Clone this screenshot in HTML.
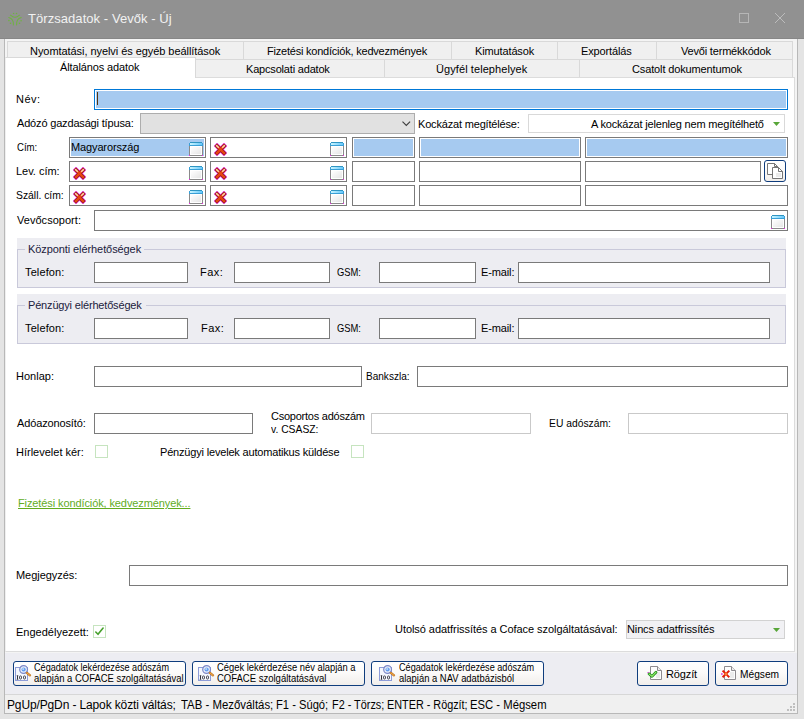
<!DOCTYPE html>
<html><head><meta charset="utf-8">
<style>
*{box-sizing:border-box;margin:0;padding:0}
html,body{width:804px;height:719px;overflow:hidden;background:#e4e4e4}
body{font-family:"Liberation Sans",sans-serif;font-size:11px;color:#000;position:relative}
.abs,.t,.in,.tab,.btn,svg{position:absolute}
.t{white-space:nowrap;line-height:13px;height:13px}
.in{background:#fff;border:1px solid #7a7a7a}
.in.lt{border-color:#c9c9c9}
.in.sel{box-shadow:inset 0 0 0 1px #fff;background:#a6caf0}
.tab{background:#f0f0f0;border:1px solid #d9d9d9}
.btn{border:1px solid #0f3d7d;border-radius:3px;background:linear-gradient(#ffffff,#fcfbfa 45%,#f1eeeb)}
.gb{position:absolute;background:#ededf2}
.gbf{position:absolute;border:1px solid #c9c9da}
.cb{position:absolute;width:13px;height:13px;border:1px solid #c6e4bf;background:#fff}
.s{font-size:10px;line-height:11px;height:11px}
</style></head><body>

<svg width="0" height="0" style="left:0;top:0"><defs>
<linearGradient id="gwb" x1="0" x2="1" y1="0" y2="0"><stop offset="0" stop-color="#c9f5ff"/><stop offset="1" stop-color="#66c8fb"/></linearGradient>
<linearGradient id="gwg" x1="0" x2="1" y1="0" y2="1"><stop offset="0" stop-color="#ffffff"/><stop offset="1" stop-color="#e6e6e6"/></linearGradient>
<symbol id="win" viewBox="0 0 14 14"><rect x="1" y="0" width="12" height="1" fill="#2f95c2"/><rect x="0" y="1" width="14" height="3" fill="#3a9fd6"/><rect x="1" y="1" width="12" height="2" fill="url(#gwb)"/><rect x="0" y="4" width="14" height="10" fill="#8a8a8a"/><rect x="1" y="4" width="12" height="9" fill="#fff"/><rect x="2" y="5" width="10" height="7" fill="url(#gwg)"/><rect x="0" y="13" width="1" height="1" fill="#f020e8"/><rect x="13" y="13" width="1" height="1" fill="#f020e8"/></symbol>
<symbol id="rx" viewBox="0 0 13 13"><g fill="none" stroke-linecap="square"><path d="M3 3L10 10M10 3L3 10" stroke="#e818e0" stroke-width="4.700" opacity=".9"/><path d="M3 3L10 10M10 3L3 10" stroke="#8c2414" stroke-width="3.600"/><path d="M3 3L10 10M10 3L3 10" stroke="#ea4412" stroke-width="2.300"/><path d="M2.700 2.700L4.300 4.300M10.300 2.700L8.700 4.300" stroke="#fad2b8" stroke-width="1.400"/></g></symbol>
<symbol id="mag" viewBox="0 0 17 16"><rect x="0.500" y="2.500" width="12" height="13" fill="#f4f7fd" stroke="#8e9cd8"/><g fill="#34343e"><rect x="2" y="10.500" width="1" height="4"/><rect x="1.600" y="10.500" width="1.800" height="0.600"/><rect x="1.600" y="13.900" width="1.800" height="0.600"/></g><g fill="none" stroke="#34343e" stroke-width="0.850"><rect x="4.500" y="10.900" width="2" height="3.200" rx="1"/><rect x="8.500" y="10.900" width="2" height="3.200" rx="1"/></g><circle cx="8.600" cy="4.500" r="3.900" fill="#e9effb" stroke="#7c88c8" stroke-width="1.200"/><circle cx="8.600" cy="4.500" r="2.100" fill="#5f9cee"/><circle cx="8.200" cy="4.100" r="1.100" fill="#b8d4f8"/><path d="M11.900 7.900L15 10.400" stroke="#b8701e" stroke-width="2.300" stroke-linecap="round"/><path d="M11.900 7.900L15 10.400" stroke="#f0a448" stroke-width="1.200" stroke-linecap="round"/></symbol>
<symbol id="pg" viewBox="0 0 12 14"><path d="M0.500 0.500H7.500L11.500 4.500V13.500H0.500Z" fill="#fdfdfd" stroke="#8e8b8f"/><path d="M7.500 0.500V4.500H11.500" fill="#ededed" stroke="#8e8b8f"/><rect x="6" y="6" width="4" height="6" fill="#ececec"/></symbol>
</defs></svg>

<div class="abs" style="left:0;top:0;width:804px;height:39px;background:#919191;border-bottom:1px solid #878787"></div>
<svg style="left:7px;top:11px" width="16" height="16" viewBox="0 0 16 16"><g fill="none" stroke="#6fb340" stroke-width="1.050" stroke-linecap="round"><path d="M3.500 4.200Q8 8.300 12.500 4.200"/><path d="M1.800 6.600Q6.800 8 6.400 14"/><path d="M14.200 6.600Q9.200 8 9.600 14"/></g><g fill="#6fb340"><circle cx="6.600" cy="2.500" r="0.800"/><circle cx="9.500" cy="2.500" r="0.800"/><circle cx="1.900" cy="9.600" r="0.800"/><circle cx="3.500" cy="12.300" r="0.800"/><circle cx="14.100" cy="9.800" r="0.800"/><circle cx="12.500" cy="12.300" r="0.800"/></g></svg>
<div class="t" id="title" style="left:28px;top:10px;font-size:13px;line-height:18px;height:18px;color:#f2f2f2;letter-spacing:0.057px;">Törzsadatok - Vevők - Új</div>
<svg style="left:739px;top:13px" width="10" height="10"><rect x=".5" y=".5" width="9" height="9" fill="none" stroke="#b6b6b6"/></svg>
<svg style="left:775px;top:13px" width="10" height="10"><path d="M0 0L10 10M10 0L0 10" stroke="#bcbcbc" stroke-width="1" fill="none"/></svg>
<div class="abs" style="left:4px;top:39px;width:794px;height:675px;background:#f4f4f4;border:1px solid #b8b8b8;border-top:none"></div>
<div class="tab" style="left:7px;top:41px;width:237px;height:19px"></div>
<div class="t" id="tb1" style="left:30px;top:45px;letter-spacing:-0.059px;">Nyomtatási, nyelvi és egyéb beállítások</div>
<div class="tab" style="left:243px;top:41px;width:209px;height:19px"></div>
<div class="t" id="tb2" style="left:267px;top:45px;letter-spacing:-0.217px;">Fizetési kondíciók, kedvezmények</div>
<div class="tab" style="left:451px;top:41px;width:107px;height:19px"></div>
<div class="t" id="tb3" style="left:475px;top:45px;letter-spacing:-0.13px;">Kimutatások</div>
<div class="tab" style="left:557px;top:41px;width:100px;height:19px"></div>
<div class="t" id="tb4" style="left:581px;top:45px;letter-spacing:-0.13px;">Exportálás</div>
<div class="tab" style="left:656px;top:41px;width:137px;height:19px"></div>
<div class="t" id="tb5" style="left:680px;top:45px;letter-spacing:-0.186px;margin-left:1px;">Vevői termékkódok</div>
<div class="tab" style="left:195px;top:59px;width:190px;height:19px"></div>
<div class="t" id="tb7" style="left:246px;top:63px;letter-spacing:-0.186px;">Kapcsolati adatok</div>
<div class="tab" style="left:384px;top:59px;width:196px;height:19px"></div>
<div class="t" id="tb8" style="left:436px;top:63px;letter-spacing:0.082px;">Ügyfél telephelyek</div>
<div class="tab" style="left:579px;top:59px;width:214px;height:19px"></div>
<div class="t" id="tb9" style="left:632px;top:63px;letter-spacing:-0.13px;">Csatolt dokumentumok</div>
<div class="abs" style="left:5px;top:77px;width:790px;height:575px;background:#fff;border:1px solid #dcdcdc;border-left-color:#efefef"></div>
<div class="tab" style="left:5px;top:57px;width:191px;height:21px;background:#fff;border-bottom:none;border-left-color:#efefef"></div>
<div class="t" id="tb6" style="left:59px;top:61px;letter-spacing:-0.13px;margin-left:1px;">Általános adatok</div>
<div class="t" id="l1" style="left:16px;top:93px;letter-spacing:0.47px;">Név:</div>
<div class="in sel" style="left:94px;top:89px;width:694px;height:21px;border-color:#0078d7"></div>
<div class="abs" style="left:97px;top:92px;width:1px;height:13px;background:#55340f"></div>
<div class="t" id="l2" style="left:16px;top:117px;letter-spacing:-0.171px;margin-left:1px;">Adózó gazdasági típusa:</div>
<div class="abs" style="left:140px;top:113px;width:275px;height:21px;background:#e1e1e1;border:1px solid #adadad"></div>
<svg style="left:401px;top:120px" width="11" height="8"><path d="M1.500 1.700L5.300 5.500L9.100 1.700" stroke="#3c3c3c" fill="none" stroke-width="1.100"/></svg>
<div class="t" id="l3" style="left:418px;top:118px;letter-spacing:-0.177px;">Kockázat megítélése:</div>
<div class="abs" style="left:528px;top:114px;width:257px;height:19px;background:#fff;border:1px solid #d9d9d9"></div>
<div class="t" id="l4" style="left:590px;top:118px;letter-spacing:-0.183px;margin-left:1px;">A kockázat jelenleg nem megítélhető</div>
<svg style="left:773px;top:122px" width="7" height="4"><path d="M0 0h7L3.500 4z" fill="#58a639"/></svg>
<div class="t" id="l5" style="left:16px;top:141px;letter-spacing:0;transform-origin:0 0;transform:scaleX(0.8718);margin-left:1px;">Cím:</div>
<div class="in sel" style="left:69px;top:137px;width:137px;height:21px"></div>
<div class="in" style="left:210px;top:137px;width:137px;height:21px"></div>
<div class="in sel" style="left:352px;top:137px;width:63px;height:21px"></div>
<div class="in sel" style="left:419px;top:137px;width:162px;height:21px"></div>
<div class="in sel" style="left:585px;top:137px;width:203px;height:21px"></div>
<svg style="left:189px;top:142px" width="14" height="14"><use href="#win"/></svg>
<svg style="left:330px;top:142px" width="14" height="14"><use href="#win"/></svg>
<svg style="left:214px;top:143px" width="13" height="13"><use href="#rx"/></svg>
<div class="t" id="l6" style="left:16px;top:165px;letter-spacing:-0.018px;">Lev. cím:</div>
<div class="in" style="left:69px;top:161px;width:137px;height:21px"></div>
<div class="in" style="left:210px;top:161px;width:137px;height:21px"></div>
<div class="in" style="left:352px;top:161px;width:63px;height:21px"></div>
<div class="in" style="left:419px;top:161px;width:162px;height:21px"></div>
<div class="in" style="left:585px;top:161px;width:176px;height:21px"></div>
<svg style="left:189px;top:166px" width="14" height="14"><use href="#win"/></svg>
<svg style="left:330px;top:166px" width="14" height="14"><use href="#win"/></svg>
<svg style="left:73px;top:167px" width="13" height="13"><use href="#rx"/></svg>
<svg style="left:214px;top:167px" width="13" height="13"><use href="#rx"/></svg>
<div class="t" id="l7" style="left:16px;top:189px;letter-spacing:0;transform-origin:0 0;transform:scaleX(0.9409);">Száll. cím:</div>
<div class="in" style="left:69px;top:185px;width:137px;height:21px"></div>
<div class="in" style="left:210px;top:185px;width:137px;height:21px"></div>
<div class="in" style="left:352px;top:185px;width:63px;height:21px"></div>
<div class="in" style="left:419px;top:185px;width:162px;height:21px"></div>
<div class="in" style="left:585px;top:185px;width:203px;height:21px"></div>
<svg style="left:189px;top:190px" width="14" height="14"><use href="#win"/></svg>
<svg style="left:330px;top:190px" width="14" height="14"><use href="#win"/></svg>
<svg style="left:73px;top:191px" width="13" height="13"><use href="#rx"/></svg>
<svg style="left:214px;top:191px" width="13" height="13"><use href="#rx"/></svg>
<div class="t" id="l5v" style="left:71px;top:141px;letter-spacing:-0.13px;">Magyarország</div>
<div class="btn" style="left:764px;top:160px;width:22px;height:22px"></div>
<svg style="left:767px;top:163px" width="17" height="16" viewBox="0 0 17 16"><g fill="#fff" stroke="#666" stroke-width="0.900" stroke-linejoin="miter"><path d="M0.500 0.500H7.500L10.500 3.500V11.500H0.500Z"/><path d="M7.500 0.500V3.500H10.500" fill="none"/><path d="M5.500 4.500H11.500L15.500 8.500V15.500H5.500Z"/><path d="M11.500 4.500V8.500H15.500" fill="none"/></g><rect x="9" y="10" width="5" height="4" fill="#ebebeb"/></svg>
<div class="t" id="l8" style="left:16px;top:214px;letter-spacing:0.034px;margin-left:1px;">Vevőcsoport:</div>
<div class="in" style="left:94px;top:210px;width:694px;height:21px"></div>
<svg style="left:771px;top:215px" width="14" height="14"><use href="#win"/></svg>
<div class="gb" style="left:17px;top:238px;width:769px;height:50px"></div>
<div class="gbf" style="left:17px;top:249px;width:769px;height:39px"></div>
<div class="gb" style="left:25px;top:243px;width:119px;height:13px"></div>
<div class="t" id="g1" style="left:28px;top:243px;letter-spacing:-0.087px;color:#20203c;">Központi elérhetőségek</div>
<div class="t" id="g1a" style="left:24px;top:266px;letter-spacing:0.127px;margin-left:1px;">Telefon:</div>
<div class="in" style="left:94px;top:262px;width:94px;height:21px"></div>
<div class="t" id="g1b" style="left:200px;top:266px;letter-spacing:0.47px;">Fax:</div>
<div class="in" style="left:234px;top:262px;width:96px;height:21px"></div>
<div class="t" id="g1c" style="left:336px;top:266px;letter-spacing:0;transform-origin:0 0;transform:scaleX(0.8519);margin-left:1px;">GSM:</div>
<div class="in" style="left:379px;top:262px;width:97px;height:21px"></div>
<div class="t" id="g1d" style="left:481px;top:266px;letter-spacing:-0.13px;">E-mail:</div>
<div class="in" style="left:518px;top:262px;width:252px;height:21px"></div>
<div class="gb" style="left:17px;top:294px;width:769px;height:50px"></div>
<div class="gbf" style="left:17px;top:305px;width:769px;height:39px"></div>
<div class="gb" style="left:25px;top:299px;width:121px;height:13px"></div>
<div class="t" id="g2" style="left:28px;top:299px;letter-spacing:-0.173px;color:#20203c;">Pénzügyi elérhetőségek</div>
<div class="t" id="g2a" style="left:24px;top:322px;letter-spacing:0.127px;margin-left:1px;">Telefon:</div>
<div class="in" style="left:94px;top:318px;width:94px;height:21px"></div>
<div class="t" id="g2b" style="left:201px;top:322px;letter-spacing:0.47px;">Fax:</div>
<div class="in" style="left:234px;top:318px;width:96px;height:21px"></div>
<div class="t" id="g2c" style="left:336px;top:322px;letter-spacing:0;transform-origin:0 0;transform:scaleX(0.8519);margin-left:1px;">GSM:</div>
<div class="in" style="left:379px;top:318px;width:97px;height:21px"></div>
<div class="t" id="g2d" style="left:481px;top:322px;letter-spacing:-0.13px;">E-mail:</div>
<div class="in" style="left:518px;top:318px;width:252px;height:21px"></div>
<div class="t" id="l9" style="left:16px;top:370px;letter-spacing:0.02px;">Honlap:</div>
<div class="in" style="left:94px;top:366px;width:268px;height:21px"></div>
<div class="t" id="l10" style="left:366px;top:370px;letter-spacing:0;transform-origin:0 0;transform:scaleX(0.913);">Bankszla:</div>
<div class="in" style="left:417px;top:366px;width:371px;height:21px"></div>
<div class="t" id="l11" style="left:16px;top:417px;letter-spacing:-0.13px;margin-left:1px;">Adóazonosító:</div>
<div class="in" style="left:94px;top:413px;width:159px;height:21px"></div>
<div class="t" id="l12" style="left:270px;top:410px;letter-spacing:-0.242px;margin-left:1px;">Csoportos adószám</div>
<div class="t" id="l13" style="left:270px;top:423px;letter-spacing:0;transform-origin:0 0;transform:scaleX(0.94);margin-left:1px;">v. CSASZ:</div>
<div class="in lt" style="left:371px;top:413px;width:160px;height:21px"></div>
<div class="t" id="l14" style="left:549px;top:417px;letter-spacing:0;transform-origin:0 0;transform:scaleX(0.9375);">EU adószám:</div>
<div class="in lt" style="left:628px;top:413px;width:160px;height:21px"></div>
<div class="t" id="l15" style="left:16px;top:446px;letter-spacing:-0.001px;">Hírlevelet kér:</div>
<div class="cb" style="left:95px;top:445px"></div>
<div class="t" id="l16" style="left:160px;top:446px;letter-spacing:-0.181px;">Pénzügyi levelek automatikus küldése</div>
<div class="cb" style="left:351px;top:445px"></div>
<div class="t" id="l17" style="left:17px;top:497px;letter-spacing:-0.104px;margin-left:1px;color:#62ac1e;text-decoration:underline;">Fizetési kondíciók, kedvezmények...</div>
<div class="t" id="l18" style="left:16px;top:569px;letter-spacing:-0.04px;">Megjegyzés:</div>
<div class="in" style="left:129px;top:565px;width:659px;height:21px"></div>
<div class="t" id="l19" style="left:16px;top:626px;letter-spacing:0.009px;">Engedélyezett:</div>
<div class="cb" style="left:93px;top:625px"></div>
<svg style="left:93px;top:625px" width="13" height="13"><path d="M2.800 7L5 9.300L10.100 3" fill="none" stroke="#46a02c" stroke-width="1.600" stroke-linecap="round" stroke-linejoin="round"/></svg>
<div class="t" id="l20" style="left:395px;top:623px;letter-spacing:-0.052px;">Utolsó adatfrissítés a Coface szolgáltatásával:</div>
<div class="abs" style="left:626px;top:620px;width:159px;height:19px;background:#f1f1f4;border:1px solid #d2d2d2"></div>
<div class="t" id="l21" style="left:627px;top:623px;letter-spacing:-0.13px;">Nincs adatfrissítés</div>
<svg style="left:773px;top:628px" width="7" height="4"><path d="M0 0h7L3.500 4z" fill="#58a639"/></svg>
<div class="abs" style="left:5px;top:653px;width:792px;height:41px;background:#ededf2"></div>
<div class="btn" style="left:13px;top:661px;width:173px;height:25px"></div>
<svg style="left:15px;top:665px" width="17" height="16"><use href="#mag"/></svg>
<div class="t s" id="b10" style="left:33px;top:662px;letter-spacing:0;transform-origin:0 0;transform:scaleX(0.9096);margin-left:1px;">Cégadatok lekérdezése adószám</div>
<div class="t s" id="b11" style="left:33px;top:673px;letter-spacing:0;transform-origin:0 0;transform:scaleX(0.9445);margin-left:1px;">alapján a COFACE szolgáltatásával</div>
<div class="btn" style="left:192px;top:661px;width:173px;height:25px"></div>
<svg style="left:198px;top:665px" width="17" height="16"><use href="#mag"/></svg>
<div class="t s" id="b20" style="left:216px;top:662px;letter-spacing:0;transform-origin:0 0;transform:scaleX(0.9369);margin-left:1px;">Cégek lekérdezése név alapján a</div>
<div class="t s" id="b21" style="left:216px;top:673px;letter-spacing:0;transform-origin:0 0;transform:scaleX(0.95);margin-left:1px;">COFACE szolgáltatásával</div>
<div class="btn" style="left:371px;top:661px;width:173px;height:25px"></div>
<svg style="left:379px;top:665px" width="17" height="16"><use href="#mag"/></svg>
<div class="t s" id="b30" style="left:397px;top:662px;letter-spacing:0;transform-origin:0 0;transform:scaleX(0.911);margin-left:1.5px;">Cégadatok lekérdezése adószám</div>
<div class="t s" id="b31" style="left:397px;top:673px;letter-spacing:0;transform-origin:0 0;transform:scaleX(0.9418);margin-left:1.5px;">alapján a NAV adatbázisból</div>
<div class="btn" style="left:637px;top:661px;width:72px;height:25px"></div>
<svg style="left:650px;top:666px" width="12" height="14"><use href="#pg"/></svg>
<svg style="left:646px;top:668px" width="13" height="11"><path d="M3 5.800L6 8.400L10 4.200" fill="none" stroke="#1f8a1f" stroke-width="2.700" stroke-linecap="round" stroke-linejoin="round"/><path d="M3 5.800L6 8.400L10 4.200" fill="none" stroke="#98f06a" stroke-width="1.100" stroke-linecap="round" stroke-linejoin="round"/><rect x="1.500" y="4" width="1.200" height="1" fill="#e030d8"/></svg>
<div class="t" id="b4" style="left:666px;top:668px;letter-spacing:-0.13px;">Rögzít</div>
<div class="btn" style="left:715px;top:661px;width:73px;height:25px"></div>
<svg style="left:724px;top:666px" width="12" height="14"><use href="#pg"/></svg>
<svg style="left:721px;top:669px" width="10" height="10"><g fill="none" stroke-linecap="square"><path d="M2.300 2.300L7.600 7.600M7.600 2.300L2.300 7.600" stroke="#e41c0c" stroke-width="2"/><path d="M4.400 4.500L5.400 5.500M5.400 4.500L4.400 5.500" stroke="#fa7a2c" stroke-width="1.600"/></g><rect x="0.300" y="4" width="1.200" height="2" fill="#e030d8"/></svg>
<div class="t" id="b5" style="left:740px;top:668px;letter-spacing:0;transform-origin:0 0;transform:scaleX(0.9268);">Mégsem</div>
<div class="abs" style="left:5px;top:694px;width:792px;height:19px;background:#f0f0f0;border-top:1px solid #d7d7d7"></div>
<div class="t" id="st0" style="left:6px;top:698px;font-size:12px;line-height:14px;height:14px;letter-spacing:-0.13px;margin-left:1px;">PgUp/PgDn - Lapok közti váltás;</div>
<div class="t" id="st1" style="left:180px;top:698px;font-size:12px;line-height:14px;height:14px;letter-spacing:0;transform-origin:0 0;transform:scaleX(0.95);margin-left:1px;">TAB - Mezőváltás;</div>
<div class="t" id="st2" style="left:276px;top:698px;font-size:12px;line-height:14px;height:14px;letter-spacing:0;transform-origin:0 0;transform:scaleX(0.9314);">F1 - Súgó;</div>
<div class="t" id="st3" style="left:332px;top:698px;font-size:12px;line-height:14px;height:14px;letter-spacing:0;transform-origin:0 0;transform:scaleX(0.9047);">F2 - Törzs;</div>
<div class="t" id="st4" style="left:387px;top:698px;font-size:12px;line-height:14px;height:14px;letter-spacing:0;transform-origin:0 0;transform:scaleX(0.9024);">ENTER - Rögzít;</div>
<div class="t" id="st5" style="left:470px;top:698px;font-size:12px;line-height:14px;height:14px;letter-spacing:0;transform-origin:0 0;transform:scaleX(0.9408);">ESC - Mégsem</div>
<svg style="left:784px;top:702px" width="12" height="12"><g fill="#bfbfbf"><rect x="9" y="1" width="2" height="2"/><rect x="6" y="4" width="2" height="2"/><rect x="9" y="4" width="2" height="2"/><rect x="3" y="7" width="2" height="2"/><rect x="6" y="7" width="2" height="2"/><rect x="9" y="7" width="2" height="2"/></g></svg>
</body></html>
